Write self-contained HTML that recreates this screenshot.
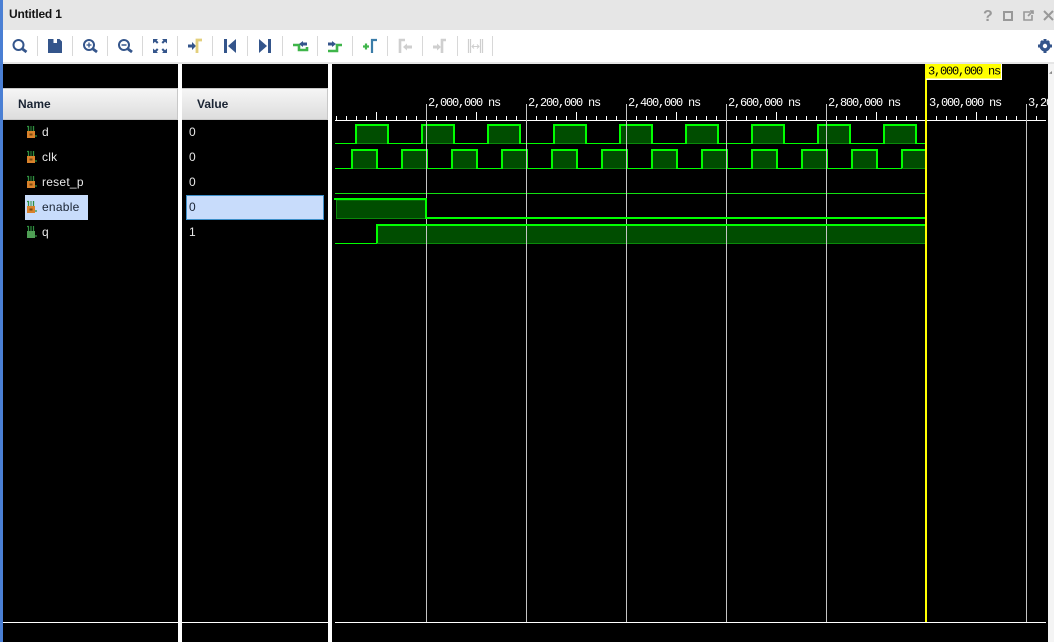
<!DOCTYPE html>
<html><head><meta charset="utf-8"><style>
html,body{margin:0;padding:0;background:#000}
body{width:1054px;height:642px;overflow:hidden;position:relative;font-family:"Liberation Sans",sans-serif}
svg{position:absolute;left:0;top:0}
</style></head><body>
<svg width="1054" height="642" viewBox="0 0 1054 642" xmlns="http://www.w3.org/2000/svg">
<defs>
<linearGradient id="h" x1="0" y1="0" x2="0" y2="1"><stop offset="0" stop-color="#f6f6f6"/><stop offset="1" stop-color="#dcdcdc"/></linearGradient>
<pattern id="t" x="336" y="116" width="10" height="4" patternUnits="userSpaceOnUse"><rect width="1" height="4" fill="#fff"/></pattern>
<g id="dp"><rect x="356" y="125" width="32" height="18.500" fill="#004d00" stroke="#0a8a0a"/><path d="M356 144V125H388V144" fill="none" stroke="#0f0" stroke-width="2"/></g>
<g id="cp"><rect x="352" y="150" width="25" height="18.500" fill="#004d00" stroke="#0a8a0a"/><path d="M352 169V150H377V169" fill="none" stroke="#0f0" stroke-width="2"/></g>
<g id="sig"><path d="M1.500 0V7M6.500 0V10H10M0 0.500H2" fill="none" stroke="#2f8f3f" stroke-width="1.300"/><path d="M4 0V6" fill="none" stroke="#2f8f3f" stroke-width="1"/><rect x="0" y="5" width="8" height="7" fill="#d9822b"/><rect x="2.500" y="7.500" width="3" height="2" fill="#7a4a10"/></g>
</defs>
<rect width="1054" height="642" fill="#000"/>
<rect y="0" width="1054" height="30" fill="#e6e6e6"/>
<rect y="30" width="1054" height="32" fill="#fff"/>
<rect y="62" width="1054" height="2" fill="#e6e6e6"/>
<rect x="1048" y="64" width="6" height="578" fill="#f4f4f4"/>
<rect x="178" y="64" width="4" height="578" fill="#fff"/>
<rect x="328" y="64" width="4" height="578" fill="#fff"/>
<rect x="0" y="0" width="3" height="642" fill="#4a7fd4"/>
<path d="M1049 73.500l3-2.500v3z" fill="#888"/>
<text x="9" y="18" font-size="12" font-weight="bold" fill="#141414" letter-spacing="-.2">Untitled 1</text>

<g fill="none" stroke="#999" stroke-width="2">
<text x="983" y="21" font-size="16" font-weight="bold" fill="#999" stroke="none">?</text>
<rect x="1004" y="12" width="8" height="8"/>
<path d="M1030 12H1024V20H1032V15M1028 16L1033 11M1030 11H1033V14" stroke-width="1.600"/>
<path d="M1044 11L1053 20M1053 11L1044 20"/>
</g>

<g fill="#d8d8d8">
<rect x="37" y="36" width="1" height="20"/><rect x="72" y="36" width="1" height="20"/><rect x="107" y="36" width="1" height="20"/><rect x="142" y="36" width="1" height="20"/><rect x="177" y="36" width="1" height="20"/><rect x="212" y="36" width="1" height="20"/><rect x="247" y="36" width="1" height="20"/><rect x="282" y="36" width="1" height="20"/><rect x="317" y="36" width="1" height="20"/><rect x="352" y="36" width="1" height="20"/><rect x="387" y="36" width="1" height="20"/><rect x="422" y="36" width="1" height="20"/><rect x="457" y="36" width="1" height="20"/><rect x="492" y="36" width="1" height="20"/>
</g>

<g fill="none" stroke="#34558b" stroke-width="2">
<circle cx="18.500" cy="45" r="5"/><path d="M22.500 49L26.500 52" stroke-width="2.800"/>
<circle cx="89" cy="45" r="5"/><path d="M93 49L97 52" stroke-width="2.800"/><path d="M86.500 45H91.500M89 42.500V47.500" stroke-width="1.300"/>
<circle cx="124" cy="45" r="5"/><path d="M128 49L132 52" stroke-width="2.800"/><path d="M121.500 45H126.500" stroke-width="1.500"/>
</g>
<path d="M48 39H53.500V43H57V39H59.500L62 41.500V53H48Z" fill="#34558b"/>
<g fill="#34558b">
<path d="M153 39H158L156.600 40.400L158.500 42.300L157 43.800L155 41.800L153 43.500Z"/>
<path d="M167 39H162L163.400 40.400L161.500 42.300L163 43.800L165 41.800L167 43.500Z"/>
<path d="M153 53H158L156.600 51.600L158.500 49.700L157 48.200L155 50.200L153 48.500Z"/>
<path d="M167 53H162L163.400 51.600L161.500 49.700L163 48.200L165 50.200L167 48.500Z"/>
<path d="M188 44.500H192V42L196 46L192 50V47.500H188Z"/>
<rect x="224" y="39" width="3" height="14"/><path d="M236 39V53L228 46Z"/>
<rect x="268" y="39" width="3" height="14"/><path d="M259 39V53L267 46Z"/>
</g>
<path d="M197 53V40H202" fill="none" stroke="#e3cf7c" stroke-width="2.800"/>
<path d="M293 45H299V50H307V47" fill="none" stroke="#3fb54a" stroke-width="2.600"/>
<path d="M299 44L303 41V42.500H307V45.500H303V47Z" fill="#34558b"/>
<path d="M328 51H337V45H342" fill="none" stroke="#3fb54a" stroke-width="2.600"/>
<path d="M328 42.500H332V41L336 44L332 47V45.500H328Z" fill="#34558b"/>
<path d="M363 46.500H369M366 43.500V49.500" stroke="#3fb54a" stroke-width="2.200" fill="none"/>
<path d="M372 53V40H377" fill="none" stroke="#3a7ca8" stroke-width="2.200"/>
<g fill="none" stroke="#cfcfcf" stroke-width="2.600"><path d="M400 53V40H405"/><path d="M442 53V40H446"/></g>
<g fill="#cfcfcf"><path d="M403 47L407 43.500V45.500H412V48.500H407V50.500Z"/><path d="M433 45.500H437V43.500L441 47L437 50.500V48.500H433Z"/></g>
<g fill="none" stroke="#cfcfcf"><path d="M468.500 39V53M470.500 39V53M480.500 39V53M482.500 39V53" stroke-width="1.200"/><path d="M472 46.500H479M474 44.500L472 46.500L474 48.500M477 44.500L479 46.500L477 48.500" stroke-width="1"/></g>

<g fill="#34558b"><circle cx="1045" cy="46" r="5.500"/><path d="M1043.500 39h3v14h-3zM1038 44.500h14v3h-14z"/><path d="M1040 42l2-2 8 8-2 2zM1050 42l-2-2-8 8 2 2z"/></g>
<circle cx="1045" cy="46" r="2.200" fill="#fff"/>

<rect x="3" y="88" width="175" height="32" fill="url(#h)"/>
<rect x="182" y="88" width="146" height="32" fill="url(#h)"/>
<path d="M3 88.500H178M3 119.500H178M177.500 88V120M182 88.500H328M182 119.500H328M327.500 88V120" stroke="#c8c8c8" fill="none"/>
<text x="18" y="108" font-size="12" font-weight="bold" fill="#1a2433">Name</text>
<text x="197" y="108" font-size="12" font-weight="bold" fill="#1a2433">Value</text>

<rect x="25" y="195" width="63" height="25" fill="#c8dcfb"/>
<rect x="186.500" y="195.500" width="137" height="24" fill="#c8dcfb" stroke="#3d8fc9"/>
<use href="#sig" x="27" y="126"/><use href="#sig" x="27" y="151"/><use href="#sig" x="27" y="176"/><use href="#sig" x="27" y="201"/>
<g transform="translate(27,226)"><path d="M1.500 0V7M6.500 0V10H10M0 .500H2M4 0V6" fill="none" stroke="#2f8f3f" stroke-width="1.200"/><rect y="5" width="8" height="7" fill="#4f9f55"/></g>
<g font-size="12" fill="#e8e8e8" letter-spacing=".25">
<text x="42" y="136">d</text><text x="42" y="161">clk</text><text x="42" y="186">reset_p</text><text x="42" y="211" fill="#1a2433">enable</text><text x="42" y="236">q</text>
<text x="189" y="136">0</text><text x="189" y="161">0</text><text x="189" y="186">0</text><text x="189" y="211" fill="#1a2433">0</text><text x="189" y="236">1</text>
</g>

<path d="M3 622.500H178M182 622.500H328M335 622.500H1046" stroke="#fff" fill="none"/>

<rect x="336" y="116" width="710" height="4" fill="url(#t)"/>
<rect x="335" y="120" width="711" height="1" fill="#fff"/>
<path d="M376.500 112V120M476.500 112V120M576.500 112V120M676.500 112V120M776.500 112V120M876.500 112V120M976.500 112V120" stroke="#fff" fill="none"/>

<g font-family="'Liberation Mono',monospace" font-size="12" letter-spacing="-1.200" fill="#fff">
<text x="428" y="106">2,000,000 ns</text><text x="528" y="106">2,200,000 ns</text><text x="628" y="106">2,400,000 ns</text><text x="728" y="106">2,600,000 ns</text><text x="828" y="106">2,800,000 ns</text><text x="929" y="106">3,000,000 ns</text>
</g>
<svg x="1028" y="90" width="20" height="30"><text x="0" y="16" font-family="'Liberation Mono',monospace" font-size="12" letter-spacing="-1.200" fill="#fff">3,200,000 ns</text></svg>

<path d="M335 143.500H925M335 168.500H925" stroke="#0f0" fill="none"/>
<path d="M335 193.500H925" stroke="#12e012" fill="none"/>
<use href="#dp"/><use href="#dp" x="66"/><use href="#dp" x="132"/><use href="#dp" x="198"/><use href="#dp" x="264"/><use href="#dp" x="330"/><use href="#dp" x="396"/><use href="#dp" x="462"/><use href="#dp" x="528"/>
<use href="#cp"/><use href="#cp" x="50"/><use href="#cp" x="100"/><use href="#cp" x="150"/><use href="#cp" x="200"/><use href="#cp" x="250"/><use href="#cp" x="300"/><use href="#cp" x="350"/><use href="#cp" x="400"/><use href="#cp" x="450"/><use href="#cp" x="500"/>
<rect x="902" y="149" width="24" height="20" fill="#004d00"/><path d="M902 169V150H925.500" fill="none" stroke="#0f0" stroke-width="2"/><path d="M902 168.500H925" stroke="#0a8a0a"/>
<rect x="336.500" y="200" width="89" height="18.500" fill="#004d00" stroke="#0a8a0a"/>
<rect x="377" y="225" width="549" height="18.500" fill="#004d00" stroke="#0a8a0a"/>
<path d="M335 243.500H377" stroke="#0f0" fill="none"/>

<path d="M426.500 104V622M526.500 104V622M626.500 104V622M726.500 104V622M826.500 104V622M1026.500 104V622" stroke="#c4c4c4" fill="none"/>

<path d="M334 199H426V218H925" fill="none" stroke="#0f0" stroke-width="2"/>
<path d="M377 243V225H925" fill="none" stroke="#0f0" stroke-width="2"/>

<rect x="925" y="64" width="2" height="558" fill="#ff0"/>
<rect x="926" y="64" width="76" height="16" fill="#fff"/>
<rect x="926" y="64" width="75" height="14.500" fill="#ff0"/>
<text x="928" y="74.500" font-family="'Liberation Mono',monospace" font-size="12" letter-spacing="-1.200" fill="#000">3,000,000 ns</text>
</svg>
</body></html>
